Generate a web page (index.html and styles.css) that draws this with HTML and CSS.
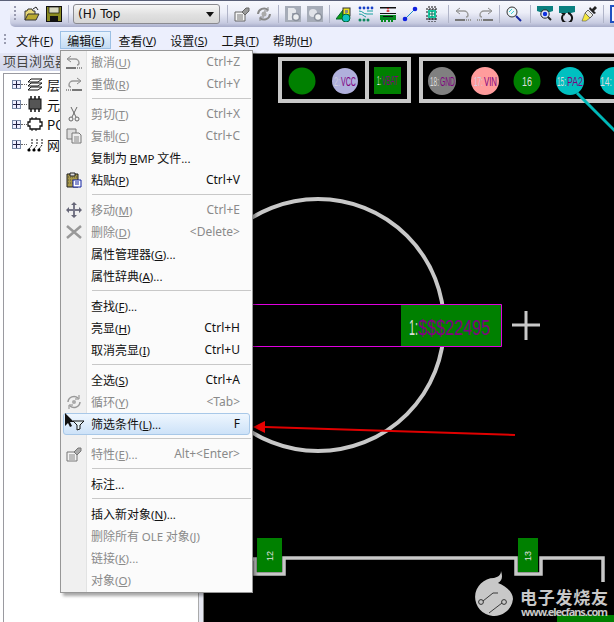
FILE: index.html
```html
<!DOCTYPE html>
<html lang="zh-CN">
<head>
<meta charset="utf-8">
<title>PCB Editor</title>
<link rel="stylesheet" href="styles.css">
</head>
<body>
<div class="app">
  <div class="toolbar">
    <span class="grip"></span>
    <svg class="ti ti-first" viewBox="0 0 16 16"><path d="M1 14V5h2l1-2h4l1 2h2v3" fill="#e8d878" stroke="#333"/><path d="M1 14l3-6h11l-3 6z" fill="#b8a830" stroke="#333"/><path d="M9 3l3-2 2 3" fill="none" stroke="#222"/></svg>
    <svg class="ti" viewBox="0 0 16 16"><rect x=".5" y=".5" width="15" height="15" fill="#8a8a20" stroke="#111"/><rect x="3" y="1" width="10" height="6" fill="#d8d8c0" stroke="#111" stroke-width=".7"/><rect x="4" y="10" width="8" height="5.5" fill="#111"/></svg>
    <span class="tsep"></span>
    <div class="combo"><span>(H) Top</span><i class="caret"></i></div>
    <span class="tsep"></span>
    <svg class="ti" viewBox="0 0 16 16"><path d="M1 6h10v9H1z" fill="#f4f4f4" stroke="#666"/><path d="M3 9h6M3 11h6M3 13h6" stroke="#777"/><path d="M8 6l4-4h3v3l-4 4z" fill="#999" stroke="#666"/></svg>
    <svg class="ti" viewBox="0 0 16 16"><path d="M2 8a6 6 0 0 1 10-4M14 8a6 6 0 0 1-10 4" fill="none" stroke="#888" stroke-width="2"/><circle cx="8" cy="8" r="2.5" fill="#aaa"/><path d="M12 1v4H8M4 15v-4h4" fill="none" stroke="#888"/></svg>
    <span class="tsep"></span>
    <svg class="ti" viewBox="0 0 16 16"><rect width="16" height="16" fill="#a6acb8"/><path d="M3 2h6l2 2v3H7v7H3z" fill="#e6e8ec"/><circle cx="11" cy="11" r="3.5" fill="#eef0f2" stroke="#8a909c" stroke-width="1.5"/></svg>
    <svg class="ti" viewBox="0 0 16 16"><rect width="16" height="16" fill="#a6acb8"/><circle cx="6" cy="7" r="4" fill="#e0e2e8"/><circle cx="11" cy="11" r="3.5" fill="#eef0f2" stroke="#8a909c" stroke-width="1.5"/></svg>
    <span class="tsep"></span>
    <svg class="ti" viewBox="0 0 16 16"><path d="M0 13L7 4v9z" fill="#10a010" stroke="#063"/><rect x="7" y="2" width="7" height="8" fill="#e8e020" stroke="#333"/><rect x="9" y="4" width="3" height="3" fill="#888"/><circle cx="10" cy="12" r="4" fill="#10c0c0" stroke="#063"/></svg>
    <svg class="ti" viewBox="0 0 16 16"><g fill="#1840c8"><circle cx="2" cy="2" r="1.4"/><circle cx="6" cy="2" r="1.4"/><circle cx="10" cy="2" r="1.4"/><circle cx="14" cy="2" r="1.4"/></g><path d="M1 5c4 0 4 3 8 3h6M1 8c4 0 4 2 7 3M9 5h6" stroke="#18a0a0" fill="none"/><g fill="#108860"><circle cx="2" cy="14" r="1.5"/><circle cx="6" cy="14" r="1.5"/><circle cx="10" cy="14" r="1.5"/></g></svg>
    <svg class="ti" viewBox="0 0 16 16"><rect x="0" y="1" width="16" height="1.5" fill="#111"/><path d="M7 2h2l-1 2z" fill="#d01010"/><path d="M6 5l2-1 2 1-2 1z" fill="#d01010"/><rect x="0" y="7" width="16" height="1" fill="#111"/><rect x="0" y="9" width="16" height="5" fill="#068a20"/><path d="M2 14v2M5 14v2M9 14v2M12 14v2" stroke="#068a20" stroke-width="2"/><rect x="3" y="10" width="10" height="1" fill="#111"/></svg>
    <svg class="ti" viewBox="0 0 16 16"><path d="M3 13L13 3" stroke="#2090c8"/><circle cx="3" cy="13" r="2.3" fill="#1020e0"/><circle cx="13" cy="3" r="2.3" fill="#1020e0"/></svg>
    <svg class="ti" viewBox="0 0 16 16"><path d="M2 3h12M2 6h12M2 10h12M2 13h12M5 0v16M8 0v16M11 0v16" stroke="#111" stroke-dasharray="2 1"/><rect x="4" y="4" width="8" height="8" fill="#18c8a0"/><rect x="6" y="6" width="4" height="4" fill="#f0f8f0"/><path d="M8 5v6M5 8h6" stroke="#107060"/></svg>
    <span class="tsep tsep-m"></span>
    <svg class="ti" viewBox="0 0 16 16"><path d="M5 2L1 5l4 3" fill="none" stroke="#888"/><path d="M1 5h8a4 4 0 0 1 4 4c0 1-1 2-2 2" fill="none" stroke="#999" stroke-width="1.4"/><path d="M0 14h10" stroke="#777" stroke-width="2"/><path d="M11 14h5" stroke="#999" stroke-width="2" stroke-dasharray="1 1"/></svg>
    <svg class="ti" viewBox="0 0 16 16"><path d="M11 2l4 3-4 3" fill="none" stroke="#888"/><path d="M15 5H7a4 4 0 0 0-4 4c0 1 1 2 2 2" fill="none" stroke="#999" stroke-width="1.4"/><path d="M6 14h10" stroke="#777" stroke-width="2"/><path d="M0 14h5" stroke="#999" stroke-width="2" stroke-dasharray="1 1"/></svg>
    <span class="tsep"></span>
    <svg class="ti" viewBox="0 0 16 16"><circle cx="6" cy="6" r="5" fill="#eef8fa" stroke="#333"/><path d="M3 6l3-3M5 8l3-3" stroke="#40d0d8"/><path d="M10 10l5 5" stroke="#1828a0" stroke-width="2"/></svg>
    <span class="tsep tsep-m"></span>
    <svg class="ti" viewBox="0 0 16 16"><path d="M0 0h16v5l-3 1H3L0 5z" fill="#0a8080"/><circle cx="8" cy="8" r="4.2" fill="#dfe8f8" stroke="#222"/><circle cx="8" cy="8" r="2.2" fill="#1030e0"/><path d="M11 11l3 3" stroke="#222" stroke-width="2"/></svg>
    <svg class="ti" viewBox="0 0 16 16"><path d="M0 0h16v6l-4 1H0z" fill="#0a8080"/><path d="M4 9a5 5 0 1 0 5-2" fill="none" stroke="#111" stroke-width="2"/><path d="M2 7l3 3 2-3z" fill="#111"/></svg>
    <svg class="ti" viewBox="0 0 16 16"><path d="M9 1l2 2 3-3 2 2-3 3 2 2-2 1-5-5z" fill="#222"/><path d="M7 4l5 5-3 3-5-5z" fill="#e8e8e0" stroke="#222" stroke-width=".7"/><path d="M4 7l5 5-4 3-4 0z" fill="#f4e840" stroke="#555" stroke-width=".6"/></svg>
    <span class="tsep"></span>
    <span class="tbox"></span>
  </div>

  <nav class="menubar">
    <span class="grip grip-menu"></span>
    <span class="mi">文件<small>(<u>F</u>)</small></span>
    <span class="mi mi-open">编辑<small>(<u>E</u>)</small></span>
    <span class="mi">查看<small>(<u>V</u>)</small></span>
    <span class="mi">设置<small>(<u>S</u>)</small></span>
    <span class="mi">工具<small>(<u>T</u>)</small></span>
    <span class="mi">帮助<small>(<u>H</u>)</small></span>
  </nav>

  <div class="main">
    <aside class="side">
      <div class="side-head">项目浏览器</div>
      <ul class="tree">
        <li><i class="exp"></i><i class="dots"></i><svg class="ni" viewBox="0 0 16 16"><path d="M4 3h11L11 6H1zM4 7h11l-4 3H1zM4 11h11l-4 3H1z" fill="#fff" stroke="#111"/></svg><span>层</span></li>
        <li><i class="exp"></i><i class="dots"></i><svg class="ni" viewBox="0 0 16 16"><rect x="2" y="3" width="12" height="10" fill="#555" stroke="#111"/><path d="M4 0v3M8 0v3M12 0v3M4 13v3M8 13v3M12 13v3" stroke="#111" stroke-width="1.5"/></svg><span>元器件</span></li>
        <li><i class="exp"></i><i class="dots"></i><svg class="ni" viewBox="0 0 16 16"><path d="M3 3h10v3h2v4h-2v3H3v-3H1V6h2z" fill="#fff" stroke="#111" stroke-width="1.3"/><path d="M5 1v2M9 1v2M5 13v2M9 13v2" stroke="#111"/></svg><span>PCB</span></li>
        <li><i class="exp"></i><i class="dots"></i><svg class="ni" viewBox="0 0 16 16"><path d="M2 13l3-4V3M7 13l3-4V3M12 13l3-4V3" fill="none" stroke="#111" stroke-dasharray="2 1"/><circle cx="2" cy="14" r="1.6"/><circle cx="7" cy="14" r="1.6"/><circle cx="12" cy="14" r="1.6"/></svg><span>网络</span></li>
      </ul>
    </aside>
    <div class="splitter"></div>
    <div class="canvas">
      <svg class="board" viewBox="204 54 410 568" aria-label="PCB">
        <g fill="none" stroke="#c8c8c8" stroke-width="4">
          <rect x="280" y="59" width="129" height="42"/>
          <path d="M367 59v42"/>
          <rect x="421" y="59" width="200" height="42"/>
          <circle cx="318" cy="325" r="126"/>
          <path d="M252 559h3v15h29v-16h232v16h25v-16h62v24" stroke-width="3.5"/>
        </g>
        <path d="M577 93l45 45" stroke="#00b8b8" stroke-width="3"/>
        <circle cx="302" cy="81" r="13.5" fill="#008000"/>
        <circle cx="345" cy="81" r="13" fill="#b0b0dc"/>
        <rect x="374" y="67" width="27" height="27" fill="#008000"/>
        <circle cx="442" cy="81" r="14" fill="#808080"/>
        <circle cx="485" cy="81" r="14" fill="#ff9c9c"/>
        <circle cx="527" cy="81" r="13.5" fill="#008000"/>
        <circle cx="570" cy="81" r="14" fill="#00c0c0"/>
        <circle cx="614" cy="81" r="14" fill="#00c0c0"/>
        <g class="pin">
          <text class="pn dim" x="334" y="86" textLength="6" lengthAdjust="spacingAndGlyphs">2:</text>
          <text x="341" y="86" textLength="15" lengthAdjust="spacingAndGlyphs">VCC</text>
          <text class="pn small" x="377" y="85" textLength="4" lengthAdjust="spacingAndGlyphs">1:</text>
          <text class="small" x="382" y="85" textLength="16" lengthAdjust="spacingAndGlyphs">VBAT</text>
          <text class="pn" x="430" y="86" textLength="9" lengthAdjust="spacingAndGlyphs">18:</text>
          <text x="440" y="86" textLength="15" lengthAdjust="spacingAndGlyphs">GND</text>
          <text class="pn dim" x="474" y="86" textLength="9" lengthAdjust="spacingAndGlyphs">17:</text>
          <text x="484" y="86" textLength="13" lengthAdjust="spacingAndGlyphs">VIN</text>
          <text class="pn" x="522" y="86" textLength="10" lengthAdjust="spacingAndGlyphs">16</text>
          <text class="pn" x="557" y="86" textLength="9" lengthAdjust="spacingAndGlyphs">15:</text>
          <text x="567" y="86" textLength="16" lengthAdjust="spacingAndGlyphs">PA2</text>
          <text class="pn" x="600" y="86" textLength="12" lengthAdjust="spacingAndGlyphs">14:</text>
        </g>
        <path d="M252 304.500H501.500V346.500H252" fill="none" stroke="#e000e0"/>
        <rect x="401" y="305" width="100" height="41" fill="#008000"/>
        <text class="padlabel pn" x="409" y="335" textLength="9" lengthAdjust="spacingAndGlyphs">1:</text>
        <text class="padlabel" x="418" y="335" textLength="72" lengthAdjust="spacingAndGlyphs">$$$22495</text>
        <path d="M512 325h28M526 311v29" stroke="#c8c8c8" stroke-width="3"/>
        <rect x="257" y="538" width="25" height="34" fill="#008000"/>
        <rect x="518" y="538" width="20" height="34" fill="#008000"/>
        <text class="vlabel" transform="translate(273 561) rotate(-90)">12</text>
        <text class="vlabel" transform="translate(531 561) rotate(-90)">13</text>
        <rect x="557" y="615" width="57" height="7" fill="#008000"/>
        <path d="M515 435L265 427" stroke="#e00000" stroke-width="2"/>
        <path d="M253 427l12-6v12z" fill="#e80000"/>
        <g class="mark">
          <path d="M494 578c4-1 7-3 7-7 2 6 1 10-3 12 8 3 15 9 15 16a19 19 0 1 1-19-21z" fill="#c8c8c8"/>
          <path d="M483 601l10-8h5M502 603l-13 10" stroke="#3a3a3a" fill="none"/>
          <circle cx="481" cy="602" r="2.400" fill="#c8c8c8" stroke="#333"/>
          <circle cx="504" cy="602" r="2.400" fill="#c8c8c8" stroke="#333"/>
          <text class="m1" x="520" y="604" textLength="88">电子发烧友</text>
          <text class="m2" x="521" y="616" textLength="87">www.elecfans.com</text>
        </g>
      </svg>
    </div>
  </div>

  <div class="menu">
    <div class="item off"><span class="ic"><svg viewBox="0 0 16 16"><path d="M5 2L1 5l4 3" fill="none" stroke="#888"/><path d="M1 5h8a4 4 0 0 1 4 4c0 1-1 2-2 2" fill="none" stroke="#999" stroke-width="1.400"/><path d="M0 14h10" stroke="#777" stroke-width="2"/><path d="M11 14h5" stroke="#999" stroke-width="2" stroke-dasharray="1 1"/></svg></span><span class="lb">撤消<small>(<u>U</u>)</small></span><span class="sc">Ctrl+Z</span></div>
    <div class="item off"><span class="ic"><svg viewBox="0 0 16 16"><path d="M11 2l4 3-4 3" fill="none" stroke="#888"/><path d="M15 5H7a4 4 0 0 0-4 4c0 1 1 2 2 2" fill="none" stroke="#999" stroke-width="1.400"/><path d="M6 14h10" stroke="#777" stroke-width="2"/><path d="M0 14h5" stroke="#999" stroke-width="2" stroke-dasharray="1 1"/></svg></span><span class="lb">重做<small>(<u>R</u>)</small></span><span class="sc">Ctrl+Y</span></div>
    <div class="sep"></div>
    <div class="item off"><span class="ic"><svg viewBox="0 0 16 16"><path d="M5 1l5 10M11 1L6 11" stroke="#666" fill="none"/><circle cx="5" cy="13" r="2" fill="none" stroke="#666"/><circle cx="11" cy="13" r="2" fill="none" stroke="#666"/></svg></span><span class="lb">剪切<small>(<u>T</u>)</small></span><span class="sc">Ctrl+X</span></div>
    <div class="item off"><span class="ic"><svg viewBox="0 0 16 16"><path d="M1 1h9v10H1z" fill="#ddd" stroke="#777"/><path d="M6 5h7l2 2v8H6z" fill="#eee" stroke="#777"/><path d="M8 9h5M8 11h5M8 13h5" stroke="#888"/></svg></span><span class="lb">复制<small>(<u>C</u>)</small></span><span class="sc">Ctrl+C</span></div>
    <div class="item"><span class="ic"></span><span class="lb">复制为 <small><u>B</u>MP</small> 文件<small>...</small></span></div>
    <div class="item"><span class="ic"><svg viewBox="0 0 16 16"><path d="M1 2h11v13H1z" fill="#a89848" stroke="#222"/><path d="M4 1h5v3H4z" fill="#ddd" stroke="#222"/><path d="M2 5h9M2 8h5M2 11h5" stroke="#554" stroke-dasharray="1 1"/><path d="M7 8h8v7H7z" fill="#fff" stroke="#1020a0"/><path d="M9 10h4M9 12h4" stroke="#1020a0"/></svg></span><span class="lb">粘贴<small>(<u>P</u>)</small></span><span class="sc on">Ctrl+V</span></div>
    <div class="sep"></div>
    <div class="item off"><span class="ic"><svg viewBox="0 0 16 16"><path d="M8 1v14M1 8h14" stroke="#778" stroke-width="2"/><path d="M8 0l3 3H5zM8 16l3-3H5zM0 8l3-3v6zM16 8l-3-3v6z" fill="#667"/></svg></span><span class="lb">移动<small>(<u>M</u>)</small></span><span class="sc">Ctrl+E</span></div>
    <div class="item off"><span class="ic"><svg viewBox="0 0 16 16"><path d="M1 2l14 12M15 2L1 14" stroke="#999" stroke-width="2.500"/></svg></span><span class="lb">删除<small>(<u>D</u>)</small></span><span class="sc">&lt;Delete&gt;</span></div>
    <div class="item"><span class="ic"></span><span class="lb">属性管理器<small>(<u>G</u>)...</small></span></div>
    <div class="item"><span class="ic"></span><span class="lb">属性辞典<small>(<u>A</u>)...</small></span></div>
    <div class="sep"></div>
    <div class="item"><span class="ic"></span><span class="lb">查找<small>(<u>F</u>)...</small></span></div>
    <div class="item"><span class="ic"></span><span class="lb">亮显<small>(<u>H</u>)</small></span><span class="sc on">Ctrl+H</span></div>
    <div class="item"><span class="ic"></span><span class="lb">取消亮显<small>(<u>I</u>)</small></span><span class="sc on">Ctrl+U</span></div>
    <div class="sep"></div>
    <div class="item"><span class="ic"></span><span class="lb">全选<small>(<u>S</u>)</small></span><span class="sc on">Ctrl+A</span></div>
    <div class="item off"><span class="ic"><svg viewBox="0 0 16 16"><path d="M2 8a6 6 0 0 1 10-4M14 8a6 6 0 0 1-10 4" fill="none" stroke="#999" stroke-width="1.500"/><circle cx="8" cy="8" r="2" fill="#aaa"/><path d="M13 1v4H9M3 15v-4h4" fill="none" stroke="#888"/></svg></span><span class="lb">循环<small>(<u>Y</u>)</small></span><span class="sc">&lt;Tab&gt;</span></div>
    <div class="item hot"><span class="ic"><svg viewBox="0 0 22 18"><path d="M1 0v13l3-3 2 4 2-1-2-4h4z" fill="#111"/><path d="M9 8h11l-4 4v4l-3 1v-5z" fill="#e8f4f8" stroke="#111"/></svg></span><span class="lb">筛选条件<small>(<u>L</u>)...</small></span><span class="sc on">F</span></div>
    <div class="sep"></div>
    <div class="item off"><span class="ic"><svg viewBox="0 0 16 16"><path d="M1 6h10v9H1z" fill="#f4f4f4" stroke="#777"/><path d="M3 9h6M3 11h6M3 13h6" stroke="#888"/><path d="M8 6l4-4h3v3l-4 4z" fill="#aaa" stroke="#777"/></svg></span><span class="lb">特性<small>(<u>E</u>)...</small></span><span class="sc">Alt+&lt;Enter&gt;</span></div>
    <div class="sep"></div>
    <div class="item"><span class="ic"></span><span class="lb">标注<small>...</small></span></div>
    <div class="sep"></div>
    <div class="item"><span class="ic"></span><span class="lb">插入新对象<small>(<u>N</u>)...</small></span></div>
    <div class="item off"><span class="ic"></span><span class="lb">删除所有 <small>OLE</small> 对象<small>(<u>J</u>)</small></span></div>
    <div class="item off"><span class="ic"></span><span class="lb">链接<small>(<u>K</u>)...</small></span></div>
    <div class="item off"><span class="ic"></span><span class="lb">对象<small>(<u>O</u>)</small></span></div>
  </div>
</div>
</body>
</html>
```
FILE: styles.css
```css
* { box-sizing: border-box; }
html, body { margin: 0; height: 100%; }
body { background: #eef0fb; overflow: hidden; }
.app {
  position: relative;
  width: 614px;
  height: 622px;
  display: grid;
  grid-template-rows: 26px 26px 1fr;
  border-top: 1px solid #5a6078;
  background: #eceffd;
  font: 12px "Noto Sans CJK SC", "Noto Sans", sans-serif;
  color: #111;
  overflow: hidden;
}
small { font: 11.5px "Noto Sans", "Noto Sans CJK SC", sans-serif; }

.toolbar {
  display: flex;
  align-items: center;
  gap: 6px;
  padding-left: 4px;
  margin-left: 10px;
  border-radius: 0 0 0 5px;
  background: linear-gradient(#f7f8fd 0%, #eceef8 45%, #c6cae0 85%, #a6abc8 100%);
}
.grip { width: 2px; height: 16px; background: repeating-linear-gradient(#9a9cb0 0 2px, transparent 2px 4px); flex: none; }
.ti { width: 16px; height: 16px; flex: none; }
.ti-first { margin-left: 2px; }
.tsep { width: 1px; height: 18px; background: #b0b4c8; flex: none; }
.tsep-m { margin-left: 2px; }
.tbox { width: 10px; height: 18px; background: #f4f6ff; border: 2px solid #2050c0; border-right: 0; flex: none; }
.combo {
  width: 147px;
  height: 20px;
  margin: 0 1px 0 -2px;
  padding: 0 4px;
  display: flex;
  align-items: center;
  justify-content: space-between;
  font: 12px "DejaVu Sans", sans-serif;
  border: 1px solid #8a8a90;
  border-radius: 3px;
  background: linear-gradient(#f6f6f6, #e0e0e0 55%, #d6d6d6);
  flex: none;
}
.caret { border: 4px solid transparent; border-top: 5px solid #111; border-bottom: 0; margin-right: 1px; }

.menubar {
  display: flex;
  align-items: center;
  padding-left: 4px;
  background: #eceffd;
}
.grip-menu { margin-right: 3px; height: 12px; }
.mi { padding: 0 6px; height: 18px; display: flex; align-items: center; white-space: nowrap; border: 1px solid transparent; }
.mi-open { border-color: #9cc0e4; background: linear-gradient(#e8f3fd, #c4dcf4); }

.main { display: flex; min-height: 0; }
.side { width: 198px; flex: none; background: #fff; }
.side-head {
  height: 18px;
  padding: 0 0 0 3px;
  line-height: 16px;
  color: #444;
  font-size: 13px;
  background: linear-gradient(#e4e6f4, #cfd4e8);
}
.tree {
  list-style: none;
  margin: 2px 0 0 3px;
  padding: 2px 0 0 8px;
  height: 560px;
  border-left: 1px solid #9a9aa0;
  border-top: 1px solid #9a9aa0;
  background: #fff;
  display: flex;
  flex-direction: column;
  gap: 4px;
  font-size: 13px;
}
.tree li { display: flex; align-items: center; height: 16px; }
.exp { width: 9px; height: 9px; border: 1px solid #7a8aa8; background: linear-gradient(90deg, transparent 3px, #224 3px 4px, transparent 4px), linear-gradient(transparent 3px, #224 3px 4px, transparent 4px), #eef; flex: none; }
.dots { width: 6px; border-top: 1px dotted #666; flex: none; }
.ni { width: 16px; height: 16px; margin-right: 4px; flex: none; }

.splitter { width: 6px; flex: none; background: #e6e8f2; border-right: 1px solid #888; border-left: 1px solid #aaa; }
.canvas { flex: 1; background: #000; min-width: 0; border-top: 1px solid #777; }
.board { display: block; width: 410px; height: 568px; }
.pin text { font: 13px "Liberation Sans", sans-serif; fill: #800080; }
.pin .small { font-size: 12px; }
.pin .pn { fill: #dcdcdc; }
.pin .pn.dim { fill: #cfcfe0; }
.padlabel { font: 22px "Liberation Sans", sans-serif; fill: #800080; }
.padlabel.pn { fill: #dcdcdc; }
.vlabel { font: 9px "Liberation Sans", sans-serif; fill: #e0e0e0; }
.m1 { font: bold 17px "Noto Sans CJK SC", sans-serif; fill: #c8c8c8; }
.m2 { font: bold 11px "Noto Sans", sans-serif; fill: #c8c8c8; }

.menu {
  position: absolute;
  left: 60px;
  top: 49px;
  width: 193px;
  height: 543px;
  padding: 0 1px;
  background: linear-gradient(90deg, #f0f0f0 25px, #e2e3e3 25px 26px, #fbfbfb 26px);
  border: 1px solid #979797;
  box-shadow: 3px 3px 3px rgba(0, 0, 0, .35);
}
.item { display: flex; align-items: center; height: 22px; padding-right: 11px; white-space: nowrap; position: relative; }
.ic { width: 29px; height: 22px; display: flex; align-items: center; justify-content: center; padding-right: 5px; flex: none; }
.ic svg { width: 16px; height: 16px; }
.lb { flex: 1; margin-top: -2px; }
.sc { color: #8a8a8a; font: 12px "Noto Sans", sans-serif; margin-top: -2px; }
.sc.on { color: #111; }
.off, .off small { color: #8a8a8a; }
.hot {
  margin: 0 1px 0 1px;
  padding-right: 9px;
  border: 1px solid #a8c8e8;
  border-radius: 3px;
  background: linear-gradient(#eef6fe, #cde2f8);
}
.hot .ic { width: 27px; justify-content: flex-start; padding: 0; margin-left: 0; }
.hot .ic svg { width: 22px; height: 18px; margin-top: -4px; }
.sep { height: 8px; margin-left: 30px; background: linear-gradient(transparent 3px, #c8c8c8 3px 4px, transparent 4px); }
```
